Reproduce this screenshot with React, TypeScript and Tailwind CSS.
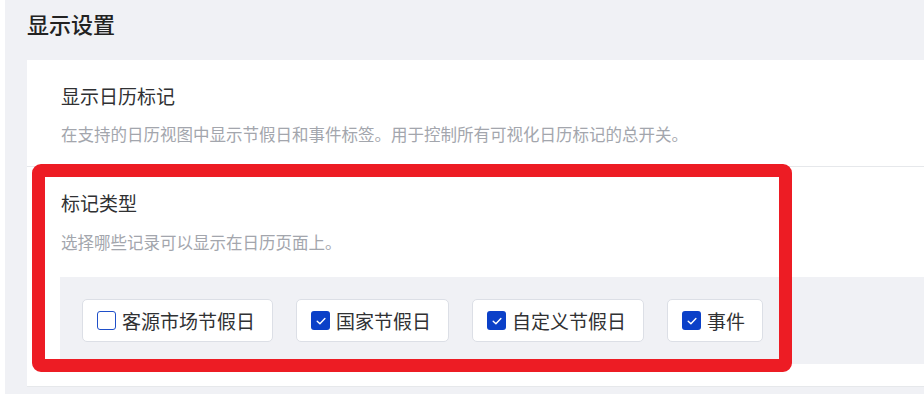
import React, { useState } from 'react';

const OPTIONS = [
  { label: '客源市场节假日', checked: false },
  { label: '国家节假日', checked: true },
  { label: '自定义节假日', checked: true },
  { label: '事件', checked: true },
];

function CheckOption({ label, checked, onToggle }: { label: string; checked: boolean; onToggle: () => void }) {
  return (
    <button
      onClick={onToggle}
      className="h-[43px] pl-[14px] pr-[17px] flex items-center gap-[6px] bg-white border border-[#dcdfe6] rounded-[5px]"
    >
      {checked ? (
        <span className="w-[19px] h-[19px] rounded-[3px] bg-[#0b40c8] flex items-center justify-center">
          <svg width="12" height="12" viewBox="0 0 12 12" fill="none">
            <path d="M2.2 6.2 L4.9 8.8 L9.9 3.4" stroke="#ffffff" strokeWidth="1.4" strokeLinecap="round" strokeLinejoin="round" />
          </svg>
        </span>
      ) : (
        <span className="w-[19px] h-[19px] rounded-[3px] border-[1.5px] border-[#1f4fc9] bg-white" />
      )}
      <span className="text-[19px] leading-[24px] text-[#303133]">{label}</span>
    </button>
  );
}

export default function App() {
  const [opts, setOpts] = useState(OPTIONS);

  return (
    <div
      className="relative w-[924px] h-[394px] overflow-hidden bg-white"
      style={{ fontFamily: '"Noto Sans CJK SC", "Noto Sans", sans-serif' }}
    >
      <div className="ml-[5px] h-full bg-[#f0f1f5] pl-[22px]">
        {/* header */}
        <div className="h-[60px] pt-[8px]">
          <h1 className="text-[22px] leading-[30px] font-medium text-[#222222]">显示设置</h1>
        </div>

        {/* panel */}
        <div className="bg-white">
          <div className="px-[34px] pt-[24px] pb-[20px] border-b border-[#e6e8eb]">
            <div className="text-[19px] leading-[24px] text-[#303133]">显示日历标记</div>
            <div className="mt-[14px] text-[16.5px] leading-[24px] text-[#a3a6ad]">
              在支持的日历视图中显示节假日和事件标签。用于控制所有可视化日历标记的总开关。
            </div>
          </div>

          <div className="pt-[24px] pb-[22px] border-b border-[#e6e8eb]">
            <div className="px-[34px]">
              <div className="text-[19px] leading-[24px] text-[#303133]">标记类型</div>
              <div className="mt-[15px] text-[16.5px] leading-[24px] text-[#a3a6ad]">选择哪些记录可以显示在日历页面上。</div>
            </div>
            <div className="mt-[23px] ml-[33px] bg-[#f0f1f5] py-[22px] pl-[22px] flex gap-[23px]">
              {opts.map((o, i) => (
                <CheckOption
                  key={o.label}
                  label={o.label}
                  checked={o.checked}
                  onToggle={() => setOpts(opts.map((x, j) => (j === i ? { ...x, checked: !x.checked } : x)))}
                />
              ))}
            </div>
          </div>
        </div>
      </div>

      {/* red highlight annotation */}
      <div className="absolute left-[32px] top-[164px] w-[760px] h-[208px] border-[13px] border-[#ed1c24] rounded-[9px] pointer-events-none" />
    </div>
  );
}
